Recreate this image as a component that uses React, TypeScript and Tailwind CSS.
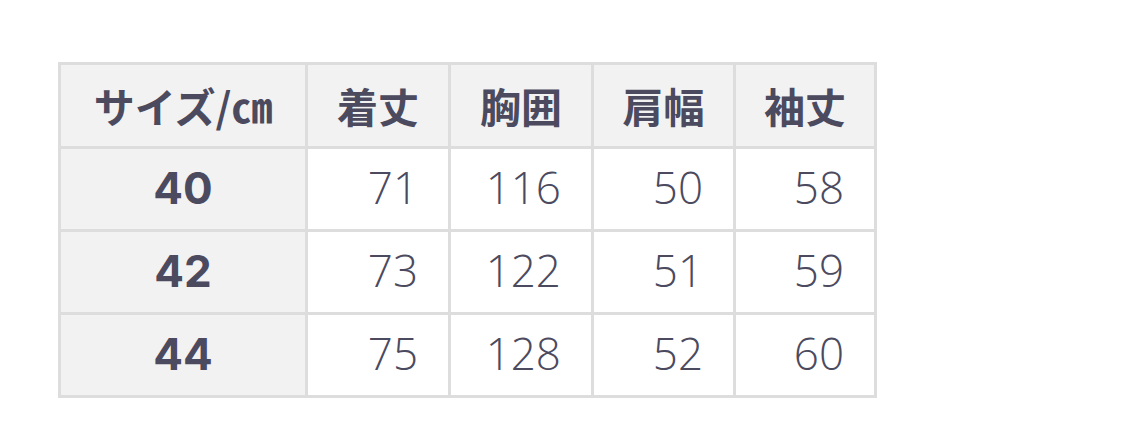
const rows = [
  { size: "40", values: ["71", "116", "50", "58"] },
  { size: "42", values: ["73", "122", "51", "59"] },
  { size: "44", values: ["75", "128", "52", "60"] },
];

const headers = ["着丈", "胸囲", "肩幅", "袖丈"];

export default function App() {
  return (
    <div className="w-[1125px] h-[435px] bg-white pt-[62px] pl-[58px] text-[#4b4a5e] font-['Inter','Noto_Sans_CJK_JP',sans-serif]">
      <div className="grid w-[819px] grid-cols-[244px_140px_140px_139px_138px] grid-rows-[81px_80px_80px_80px] gap-[3px] bg-[#dddddd] p-[3px]">
        {/* header row */}
        <div className="flex items-center justify-center bg-[#f2f2f2] text-[41px] font-bold font-['Noto_Sans_CJK_JP',sans-serif]">
          サイズ/㎝
        </div>
        {headers.map((h) => (
          <div
            key={h}
            className="flex items-center justify-center bg-[#f2f2f2] text-[41px] font-bold font-['Noto_Sans_CJK_JP',sans-serif]"
          >
            {h}
          </div>
        ))}

        {/* body */}
        {rows.map((r) => (
          <>
            <div key={r.size} className="flex items-center justify-center bg-[#f2f2f2] pb-[3px] text-[44px] font-bold">
              {r.size}
            </div>
            {r.values.map((v, i) => (
              <div
                key={r.size + i}
                className="flex items-center justify-end bg-white pr-[30px] pb-[4px] text-[44px] font-light font-['Open_Sans',sans-serif]"
              >
                {v}
              </div>
            ))}
          </>
        ))}
      </div>
    </div>
  );
}
